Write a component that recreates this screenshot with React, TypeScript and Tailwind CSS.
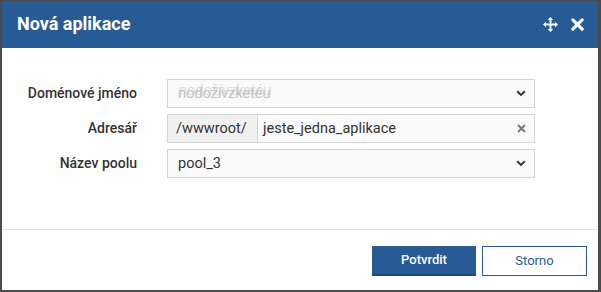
import React from "react";

function MoveIcon() {
  return (
    <svg width="15" height="15" viewBox="0 0 16 16" fill="white">
      <path d="M8 0 L11 3.2 H9 V7 H12.8 V5 L16 8 L12.8 11 V9 H9 V12.8 H11 L8 16 L5 12.8 H7 V9 H3.2 V11 L0 8 L3.2 5 V7 H7 V3.2 H5 Z" />
    </svg>
  );
}

function CloseIcon() {
  return (
    <svg width="13" height="13" viewBox="0 0 14 14">
      <path d="M2 2 L12 12 M12 2 L2 12" stroke="white" strokeWidth="3.4" strokeLinecap="round" />
    </svg>
  );
}

function Chevron() {
  return (
    <svg width="10" height="7" viewBox="0 0 10 7">
      <path d="M1.2 1.3 L5 5 L8.8 1.3" stroke="#333" strokeWidth="1.9" fill="none" />
    </svg>
  );
}

function SmallX() {
  return (
    <svg width="9" height="9" viewBox="0 0 9 9">
      <path d="M1 1 L8 8 M8 1 L1 8" stroke="#777" strokeWidth="1.8" />
    </svg>
  );
}

export default function App() {
  return (
    <div
      className="w-[601px] h-[292px] bg-[#4b4b4b] pt-[1px] pl-[2px] pr-[3px] pb-[2px]"
      style={{ fontFamily: "Roboto, 'Liberation Sans', sans-serif" }}
    >
      <div className="w-full h-full bg-white flex flex-col">
        <div className="h-[47px] bg-[#285a95] flex items-center pl-[15px] pr-[14px]">
          <div className="text-white font-bold text-[18px] flex-1 leading-none pb-[1px]">Nová aplikace</div>
          <div className="flex items-center gap-[13px] pb-[1px]">
            <MoveIcon />
            <CloseIcon />
          </div>
        </div>
        <div className="h-[181px] pt-[31px] flex flex-col gap-[6px] text-[14px] text-[#333]">
          <div className="flex items-center h-[29px]">
            <div className="w-[135px] text-right font-medium">Doménové jméno</div>
            <div className="ml-[30px] w-[368px] h-[29px] border border-[#d4d4d4] bg-[#fafafa] flex items-center pl-[10px] pr-[8px]">
              <div className="flex-1 text-[#c4c4c4] text-[15px] tracking-[-0.3px] [text-shadow:1px_-3px_0_#dddddd]">
                nodožívzketéu
              </div>
              <Chevron />
            </div>
          </div>
          <div className="flex items-center h-[29px]">
            <div className="w-[135px] text-right font-medium">Adresář</div>
            <div className="ml-[30px] w-[368px] h-[29px] border border-[#d4d4d4] bg-[#fafafa] flex items-stretch text-[14.5px]">
              <div className="w-[90px] bg-[#f0f0f0] border-r border-[#d4d4d4] flex items-center pl-[8px]">/wwwroot/</div>
              <div className="flex-1 flex items-center pl-[5px] pr-[8px]">
                <span className="flex-1">jeste_jedna_aplikace</span>
                <SmallX />
              </div>
            </div>
          </div>
          <div className="flex items-center h-[29px]">
            <div className="w-[135px] text-right font-medium">Název poolu</div>
            <div className="ml-[30px] w-[368px] h-[29px] border border-[#d4d4d4] bg-[#fafafa] flex items-center pl-[10px] pr-[8px] text-[14.5px]">
              <span className="flex-1">pool_3</span>
              <Chevron />
            </div>
          </div>
        </div>
        <div className="h-[1px] bg-[#e5e5e5]" />
        <div className="flex justify-end gap-[6px] pt-[16px] pr-[11px]">
          <button className="w-[104px] h-[30px] bg-[#285a95] border-b-[2px] border-[#1d4674] text-white text-[13px] font-medium">
            Potvrdit
          </button>
          <button className="w-[105px] h-[30px] bg-white border-[1.5px] border-[#285a95] text-[#285a95] text-[13px]">
            Storno
          </button>
        </div>
      </div>
    </div>
  );
}
